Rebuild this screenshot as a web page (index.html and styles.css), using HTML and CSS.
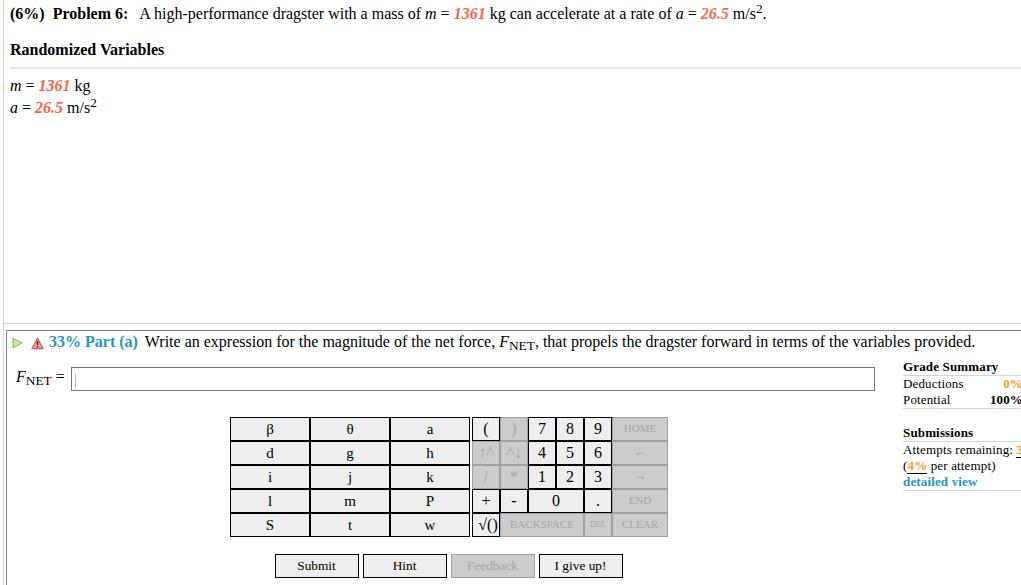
FILE: index.html
```html
<!DOCTYPE html>
<html lang="en">
<head>
    <meta charset="UTF-8">
    <meta name="viewport" content="width=device-width, initial-scale=1.0">
    <title>Problem 6</title>
    <link rel="stylesheet" href="styles.css">
</head>
<body>
    <div class="page">
        <div class="problem">
            <p class="statement"><b class="problem-label">(6%)&nbsp; Problem 6:</b><span class="problem-text">A high-performance dragster with a mass of <i>m</i> = <span class="value">1361</span> kg can accelerate at a rate of <i>a</i> = <span class="value">26.5</span> m/s<sup>2</sup>.</span></p>
            <h2>Randomized Variables</h2>
            <div class="variables">
                <p><i>m</i> = <span class="value">1361</span> kg</p>
                <p><i>a</i> = <span class="value">26.5</span> m/s<sup>2</sup></p>
            </div>
        </div>

        <div class="part">
            <div class="part-header">
                <svg class="play-icon" width="11" height="12" viewBox="0 0 11 12">
                    <path d="M1 1.2 L10 6 L1 10.8 Z" fill="#c9e6a4" stroke="#86b060" stroke-linejoin="round"/>
                </svg>
                <svg class="warn-icon" width="13" height="13" viewBox="0 0 13 13">
                    <path d="M6.5 1 L12 11.7 H1 Z" fill="#f59a9a" stroke="#c85a5e" stroke-width="1.2" stroke-linejoin="round"/>
                    <path d="M6.5 4 V8 M6.5 9 V10.5" stroke="#5a1a1c" stroke-width="1.4"/>
                </svg>
                <b class="part-label">33% Part (a)</b>
                <span class="part-text">Write an expression for the magnitude of the net force, <i>F</i><sub>NET</sub>, that propels the dragster forward in terms of the variables provided.</span>
            </div>

            <div class="part-body">
                <div class="answer-area">
                    <div class="answer">
                        <label><i>F</i><sub>NET</sub> =</label>
                        <div class="answer-box"><span class="caret"></span></div>
                    </div>

                    <div class="keyboard">
                        <div class="letters">
                            <button>β</button><button>θ</button><button>a</button>
                            <button>d</button><button>g</button><button>h</button>
                            <button>i</button><button>j</button><button>k</button>
                            <button>l</button><button>m</button><button>P</button>
                            <button>S</button><button>t</button><button>w</button>
                        </div>
                        <div class="numbers">
                            <button>(</button><button disabled>)</button><button>7</button><button>8</button><button>9</button><button class="small" disabled>HOME</button>
                            <button class="arrows" disabled>↑^</button><button class="arrows" disabled>^↓</button><button>4</button><button>5</button><button>6</button><button class="small arrow" disabled>←</button>
                            <button disabled>/</button><button disabled>*</button><button>1</button><button>2</button><button>3</button><button class="small arrow" disabled>→</button>
                            <button>+</button><button>-</button><button class="wide">0</button><button>.</button><button class="small" disabled>END</button>
                            <button class="root">√()</button><button class="backspace small" disabled>BACKSPACE</button><button class="tiny" disabled>DEL</button><button class="small" disabled>CLEAR</button>
                        </div>
                    </div>

                    <div class="actions">
                        <button>Submit</button>
                        <button>Hint</button>
                        <button disabled>Feedback</button>
                        <button>I give up!</button>
                    </div>
                </div>

                <div class="summary">
                    <h3>Grade Summary</h3>
                    <div class="summary-section">
                        <div class="summary-row"><span>Deductions</span><b class="orange">0%</b></div>
                        <div class="summary-row"><span>Potential</span><b>100%</b></div>
                    </div>
                    <h3>Submissions</h3>
                    <div class="summary-section">
                        <div class="attempts">Attempts remaining: <b class="orange underlined">3</b></div>
                        <div>(<b class="orange underlined">4%</b> per attempt)</div>
                        <div><b class="link">detailed view</b></div>
                    </div>
                </div>
            </div>
        </div>
    </div>
</body>
</html>
```
FILE: styles.css
```css
* {
    margin: 0;
    padding: 0;
    box-sizing: border-box;
}

body {
    font-family: "Liberation Serif", "Times New Roman", serif;
    font-size: 16px;
    color: #000;
    background: #fff;
    overflow: hidden;
}

.page {
    height: 585px;
    margin-left: 3px;
    border-left: 1px solid #d3d3d3;
}

.problem {
    height: 324px;
    padding: 3px 0 0 6px;
    border-bottom: 1px solid #d3d3d3;
}

.statement {
    height: 22px;
    line-height: 22px;
    white-space: nowrap;
}

.problem-text {
    margin-left: 11px;
}

sup, sub {
    font-size: 13.33px;
    line-height: 0;
}

sup {
    vertical-align: 6px;
}

sub {
    vertical-align: -3px;
}

.value {
    color: #ff6347;
    font-weight: bold;
    font-style: italic;
}

h2 {
    height: 44px;
    padding-top: 14px;
    border-bottom: 2px solid #e8e8e8;
    font-size: 16px;
    line-height: 22px;
}

.variables {
    padding-top: 6px;
    line-height: 22px;
}

.part {
    width: 1040px;
    height: 270px;
    margin: 6px 0 0 2px;
    border: 1px solid #808080;
}

.part-header {
    display: flex;
    height: 24px;
    padding-left: 5px;
    line-height: 22px;
    white-space: nowrap;
}

.play-icon {
    margin-top: 6px;
}

.warn-icon {
    margin: 6px 5px 0 8px;
}

.part-label {
    color: #2596be;
}

.part-text {
    margin-left: 7px;
}

.part-body {
    display: flex;
    gap: 28px;
}

.answer-area {
    width: 868px;
}

.answer {
    display: flex;
    padding: 12px 0 0 9px;
    line-height: 20px;
}

.answer label {
    width: 55px;
    white-space: nowrap;
}

.answer-box {
    width: 804px;
    height: 24px;
    padding: 5px 3px;
    border: 1px solid #767676;
}

.caret {
    display: block;
    width: 1px;
    height: 15px;
    background: #ff9c9c;
}

.keyboard {
    display: flex;
    gap: 2px;
    margin: 26px 0 0 223px;
}

.letters {
    display: grid;
    grid-template-columns: repeat(3, 80px);
    grid-auto-rows: 24px;
}

.numbers {
    display: grid;
    grid-template-columns: repeat(5, 28px) 56px;
    grid-auto-rows: 24px;
}

button {
    border: 1px solid #000;
    background: #eee;
    color: #000;
    font-family: inherit;
    font-size: 15px;
    line-height: 20px;
    white-space: nowrap;
}

.numbers button {
    padding-bottom: 1px;
    font-size: 16px;
}

button:disabled {
    border-color: #a0a0a0;
    background: #ccc;
    color: #a5a5a5;
}

.numbers .wide {
    grid-column: span 2;
}

.numbers .backspace {
    grid-column: span 3;
}

.numbers .small {
    padding-bottom: 2px;
    font-size: 11px;
}

.numbers .arrow {
    font-size: 13px;
}

.numbers .arrows {
    font-size: 17px;
    letter-spacing: -0.5px;
}

.numbers .root {
    padding: 0 0 0 4px;
}

.numbers .tiny {
    font-size: 8px;
}

.actions {
    display: flex;
    gap: 4px;
    margin: 17px 0 0 268px;
}

.actions button {
    width: 84px;
    height: 24px;
    padding-right: 1px;
    font-size: 13.33px;
}

.summary {
    width: 120px;
    padding-top: 4px;
    font-size: 13px;
    line-height: 16px;
    letter-spacing: 0.15px;
    white-space: nowrap;
}

.summary h3 {
    height: 17px;
    border-bottom: 1px solid #d3d3d3;
    font-size: 13px;
}

.summary-section {
    border-bottom: 1px solid #d3d3d3;
}

.summary-section + h3 {
    margin-top: 16px;
}

.summary-row {
    display: flex;
    justify-content: space-between;
}

.orange {
    color: #ff9922;
}

.underlined {
    border-bottom: 1px solid #000;
}

.link {
    color: #2596be;
}
```
